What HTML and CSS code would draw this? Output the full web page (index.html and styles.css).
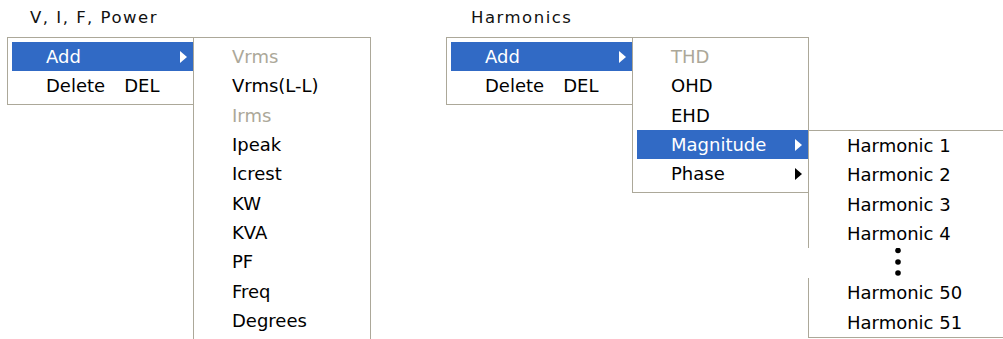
FILE: index.html
```html
<!DOCTYPE html>
<html lang="en">
<head>
  <meta charset="UTF-8">
  <title>Context Menus</title>
  <link rel="stylesheet" href="styles.css">
</head>
<body>

  <div class="page">

    <section class="group">
      <div class="title">V, I, F, Power</div>
      <ul class="menu">
        <li class="item active has-sub">
          <span>Add</span><span class="arrow"></span>
          <ul class="menu sub tall">
            <li class="item disabled">Vrms</li>
            <li class="item">Vrms(L-L)</li>
            <li class="item disabled">Irms</li>
            <li class="item">Ipeak</li>
            <li class="item">Icrest</li>
            <li class="item">KW</li>
            <li class="item">KVA</li>
            <li class="item">PF</li>
            <li class="item">Freq</li>
            <li class="item">Degrees</li>
          </ul>
        </li>
        <li class="item"><span>Delete</span><span class="key">DEL</span></li>
      </ul>
    </section>

    <section class="group">
      <div class="title second">Harmonics</div>
      <ul class="menu">
        <li class="item active has-sub">
          <span>Add</span><span class="arrow"></span>
          <ul class="menu sub narrow">
            <li class="item disabled">THD</li>
            <li class="item">OHD</li>
            <li class="item">EHD</li>
            <li class="item active has-sub">
              <span>Magnitude</span><span class="arrow"></span>
              <ul class="menu sub wide">
                <li class="item">Harmonic 1</li>
                <li class="item">Harmonic 2</li>
                <li class="item">Harmonic 3</li>
                <li class="item">Harmonic 4</li>
                <li class="item dots">
                  <svg width="6" height="30" viewBox="0 0 6 30">
                    <circle cx="3" cy="2.5" r="2.8"/>
                    <circle cx="3" cy="14" r="2.8"/>
                    <circle cx="3" cy="25" r="2.8"/>
                  </svg>
                </li>
                <li class="item">Harmonic 50</li>
                <li class="item">Harmonic 51</li>
              </ul>
            </li>
            <li class="item"><span>Phase</span><span class="arrow"></span></li>
          </ul>
        </li>
        <li class="item"><span>Delete</span><span class="key">DEL</span></li>
      </ul>
    </section>

  </div>

</body>
</html>
```

FILE: styles.css
```css
body {
  margin: 0;
  width: 1003px;
  height: 339px;
  overflow: hidden;
  background: #fff;
  font-family: "DejaVu Sans", Verdana, sans-serif;
}
.page {
  display: flex;
  padding-left: 7px;
}
.group {
  width: 439px;
  flex: none;
}
.title {
  height: 37px;
  box-sizing: border-box;
  padding: 8px 0 0 23px;
  font-size: 16.5px;
  line-height: 20px;
  letter-spacing: 1.5px;
  color: #111;
}
.title.second {
  padding-left: 25px;
}
.menu {
  list-style: none;
  margin: 0;
  padding: 4px 0 3px 4px;
  width: 187px;
  box-sizing: border-box;
  border: 1px solid #aca899;
  background: #fff;
  color: #000;
  font-size: 18px;
}
.item {
  display: flex;
  align-items: center;
  height: 29.33px;
  padding: 0 6px 0 34px;
  white-space: nowrap;
}
.item.active {
  background: #316ac5;
  color: #fff;
}
.item.disabled {
  color: #aca899;
}
.has-sub {
  position: relative;
}
.arrow {
  margin-left: auto;
  width: 0;
  height: 0;
  border-top: 6px solid transparent;
  border-bottom: 6px solid transparent;
  border-left: 7px solid currentColor;
}
.key {
  margin-left: 19px;
}
.sub {
  position: absolute;
  left: 100%;
  top: -5px;
  width: 178px;
}
.sub.tall {
  padding-bottom: 8px;
}
.sub.narrow {
  width: 177px;
}
.sub.wide {
  top: 0;
  padding-top: 0;
  padding-bottom: 0;
  width: 200px;
  border-right: none;
}
.dots {
  position: relative;
  height: 30px;
  align-items: flex-start;
}
.dots::before {
  content: '';
  position: absolute;
  left: -5px;
  top: 0;
  bottom: 0;
  width: 1px;
  background: #fff;
}
.dots svg {
  margin-left: 48px;
  fill: #000;
}
```
